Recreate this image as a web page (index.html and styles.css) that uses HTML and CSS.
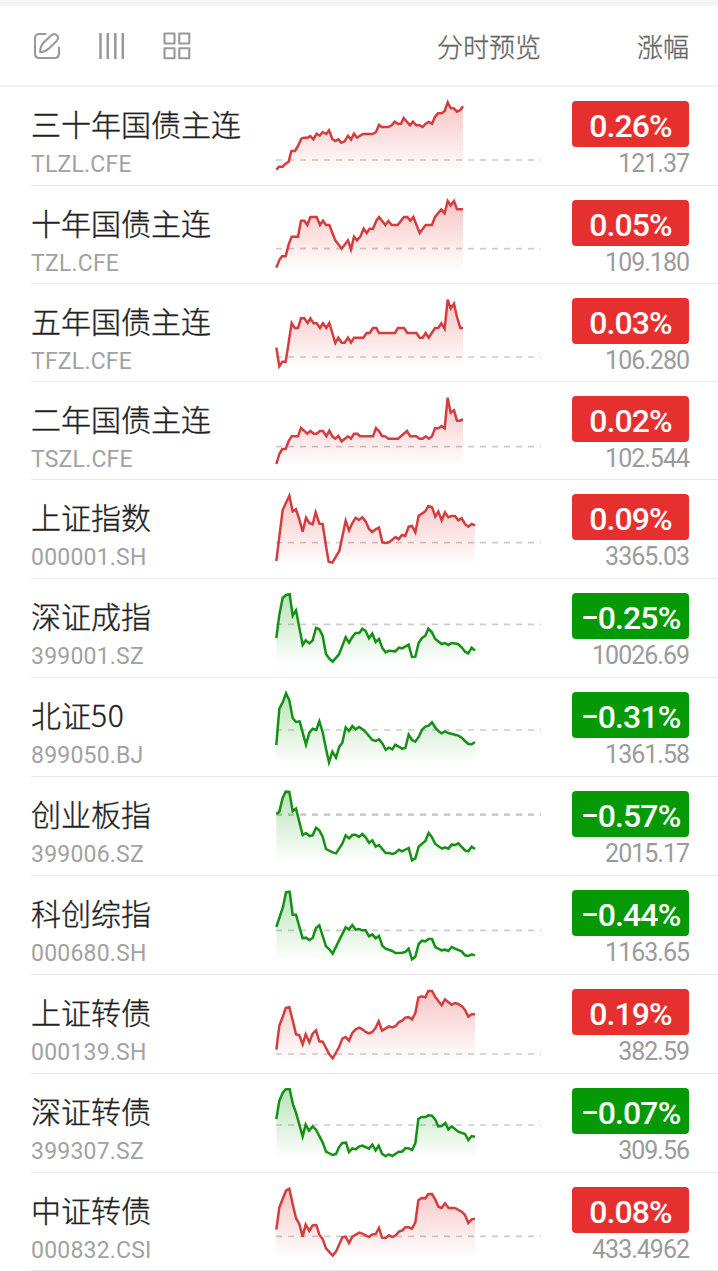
FILE: index.html
```html
<!DOCTYPE html>
<html lang="zh-CN">
<head>
<meta charset="utf-8">
<title>自选行情</title>
<link rel="stylesheet" href="styles.css">
</head>
<body>
<header class="toolbar">
  <div class="tools">
    <svg class="icon" viewBox="0 0 28 28"><path d="M12.500 2H6.500Q2 2 2 6.500V21.500Q2 26 6.500 26H21.500Q26 26 26 21.500V15.500"/><path d="M7.300 20.200C7 16 8.500 12.800 11 10.200L17.800 3.800C20 1.700 22.300 1.800 24 3.500C25.700 5.300 25.200 7.400 23.400 9.200L16.500 16C13.600 18.700 11 19.900 7.300 20.200Z"/></svg>
    <svg class="icon bars" viewBox="0 0 28 28"><path d="M2.500 1V27M9.800 1V27M17.300 1V27M24.800 1V27"/></svg>
    <svg class="icon" viewBox="0 0 28 28"><path d="M1.500 1.500H11.500V11.500H1.500ZM16.300 1.500H26.300V11.500H16.300ZM1.500 16.300H11.500V26.300H1.500ZM16.300 16.300H26.300V26.300H16.300Z"/></svg>
  </div>
  <span class="col-preview">分时预览</span>
  <span class="col-change">涨幅</span>
</header>
<main class="list" id="list"></main>
<svg class="defs" width="0" height="0">
  <defs>
    <linearGradient id="fill-up" x1="0" y1="0" x2="0" y2="1"><stop offset="0" stop-color="#e62e2e" stop-opacity=".28"/><stop offset="1" stop-color="#e62e2e" stop-opacity=".01"/></linearGradient>
    <linearGradient id="fill-down" x1="0" y1="0" x2="0" y2="1"><stop offset="0" stop-color="#0a9a0a" stop-opacity=".28"/><stop offset="1" stop-color="#0a9a0a" stop-opacity=".01"/></linearGradient>
  </defs>
</svg>
<script src="script.js"></script>
</body>
</html>
```
FILE: styles.css
```css
* { box-sizing: border-box; }
body {
  margin: 0;
  background: #fff;
  font-family: Roboto, "Noto Sans CJK SC", sans-serif;
  overflow: hidden;
}
.toolbar {
  height: 87px;
  border-top: 6px solid #f4f4f4;
  border-bottom: 2px solid #f3f3f3;
  display: grid;
  grid-template-columns: 276px 265px 148px;
  align-items: center;
  color: #666;
  font-size: 26px;
  font-weight: 300;
  line-height: 38px;
  -webkit-text-stroke: .35px #666;
}
.tools {
  display: flex;
  gap: 37px;
  padding-left: 33px;
}
.icon {
  width: 28px;
  height: 28px;
  fill: none;
  stroke: #999;
  stroke-width: 2.1;
  stroke-linecap: round;
  stroke-linejoin: round;
}
.bars { stroke-linecap: butt; stroke-width: 2.5; }
.col-preview, .col-change { text-align: right; padding-top: 5px; }
.row {
  margin-left: 31px;
  border-bottom: 1px solid #e8e8e8;
  display: grid;
  grid-template-columns: 245px 265px 148px;
  overflow: hidden;
}
.names { padding-top: 14px; }
.name {
  height: 44px;
  line-height: 44px;
  font-size: 30px;
  font-family: "Noto Sans CJK SC", sans-serif;
  font-weight: 300;
  color: #222;
  white-space: nowrap;
  -webkit-text-stroke: .35px #222;
}
.name .latin { letter-spacing: .8px; }
.code {
  height: 32px;
  margin-top: 4px;
  line-height: 32px;
  font-size: 23px;
  letter-spacing: .2px;
  color: #a2a2a2;
}
.chart { display: block; width: 265px; overflow: visible; }
.chart .base { stroke: #ccc; stroke-width: 5; stroke-dasharray: 18 18; }
.chart .base.thick { stroke-width: 8; }
.chart .line { fill: none; stroke-width: 7.5; stroke-linejoin: miter; }
.up .line { stroke: #d43d3d; }
.down .line { stroke: #159015; }
.up .area { fill: url(#fill-up); }
.down .area { fill: url(#fill-down); }
.values {
  padding-top: 14px;
  display: flex;
  flex-direction: column;
  align-items: flex-end;
}
.badge {
  width: 117px;
  height: 46px;
  border-radius: 4px;
  color: #fff;
  font-size: 32px;
  font-weight: 500;
  line-height: 50px;
  letter-spacing: -.9px;
  text-align: center;
  white-space: nowrap;
}
.up .badge { background: #e63030; }
.down .badge { background: #059a05; }
.price {
  margin-top: 1px;
  height: 32px;
  line-height: 32px;
  font-size: 25px;
  letter-spacing: -1px;
  color: #9b9b9b;
}
```
FILE: script.js
```js
// Each chart is drawn in units of one third of a pixel.
// top: first visible unit of the row; base: previous close; floor: bottom of the shaded area.
const rows = [
  { name: "三十年国债主连", code: "TLZL.CFE", pct: "0.26%", price: "121.37", h: 99, top: -3, base: 216, floor: 250,
    pts: "31,245 39,236 50,236 59,227 68,221 76,189 87,189 96,174 106,152 114,149 125,149 133,144 142,154 152,137 161,143 170,132 181,138 189,127 199,153 208,159 217,154 226,164 236,160 246,143 255,155 264,137 273,149 291,138 320,138 330,132 339,111 347,117 367,117 377,112 386,101 395,107 405,107 413,90 432,112 441,101 451,112 461,112 470,117 479,107 488,102 498,107 507,86 516,76 527,76 536,69 545,43 554,60 564,61 573,71 582,67 591,55" },
  { name: "十年国债主连", code: "TZL.CFE", pct: "0.05%", price: "109.180", h: 98, top: 0, base: 188, floor: 250,
    pts: "31,245 40,222 48,211 59,211 68,175 77,152 96,152 105,104 115,104 124,117 133,93 152,93 162,117 171,104 180,117 190,117 208,163 227,188 246,163 255,190 264,152 273,163 283,152 293,128 302,141 311,128 321,128 331,104 339,93 358,117 367,105 377,117 395,117 414,93 424,93 433,104 442,93 461,141 479,117 498,117 507,93 526,70 536,82 545,45 554,58 564,45 573,70 591,70" },
  { name: "五年国债主连", code: "TFZL.CFE", pct: "0.03%", price: "106.280", h: 98, top: 0, base: 219, floor: 250,
    pts: "31,191 40,247 49,233 59,233 68,175 77,117 86,132 96,132 105,103 115,103 125,117 133,103 143,118 152,118 162,132 171,118 181,132 190,117 208,177 217,161 227,176 236,176 246,161 255,176 264,161 292,161 302,147 311,147 321,132 331,132 339,147 387,147 396,132 414,132 424,147 451,147 461,161 470,161 479,147 488,161 507,132 517,132 526,118 536,134 545,47 554,73 564,59 573,99 583,132 591,132" },
  { name: "二年国债主连", code: "TSZL.CFE", pct: "0.02%", price: "102.544", h: 98, top: 294, base: 488, floor: 544,
    pts: "31,540 40,510 49,495 59,495 68,471 77,457 96,457 105,432 124,449 133,441 143,449 152,449 162,441 171,441 181,457 190,440 199,457 208,464 217,456 227,472 246,457 255,464 264,449 273,449 283,457 321,457 330,432 339,441 348,456 358,457 367,464 396,464 423,441 433,457 451,457 461,464 470,464 479,457 489,464 498,457 507,433 517,433 527,426 536,433 545,341 554,386 564,379 573,410 583,410 591,405" },
  { name: "上证指数", code: "000001.SH", pct: "0.09%", price: "3365.03", h: 99, top: 0, base: 188, floor: 250,
    pts: "31,243 50,90 70,47 80,94 90,88 100,118 110,155 120,113 130,129 140,133 149,97 160,131 170,132 180,198 188,245 199,248 220,213 239,122 249,151 259,129 269,113 279,120 289,112 299,124 309,147 319,156 329,148 339,143 349,187 360,189 370,186 389,171 398,178 408,165 418,168 428,140 438,138 448,157 458,107 478,94 487,78 498,82 508,110 517,95 527,121 537,97 547,112 557,108 567,108 577,121 587,115 597,132 607,140 617,132 627,136" },
  { name: "深证成指", code: "399001.SZ", pct: "-0.25%", price: "10026.69", h: 99, top: 3, base: 139, floor: 252,
    pts: "31,180 40,110 50,60 60,51 71,49 80,113 90,97 110,201 119,187 130,196 140,187 150,150 160,154 170,174 180,228 190,242 200,251 219,229 239,178 249,194 259,177 269,165 280,165 289,152 299,159 309,181 319,167 329,192 339,183 349,210 359,223 369,218 388,220 399,209 408,211 428,200 438,237 448,236 458,194 468,180 478,173 487,152 498,163 507,182 527,198 537,195 547,201 557,195 576,198 587,208 597,221 607,226 617,209 627,218" },
  { name: "北证50", code: "899050.BJ", pct: "-0.31%", price: "1361.58", h: 99, top: 300, base: 456, floor: 549,
    pts: "31,501 40,392 51,371 60,346 70,367 80,420 90,432 101,430 120,500 130,464 140,452 151,456 160,430 170,462 180,512 189,553 199,521 210,539 220,506 229,494 239,448 249,459 259,444 269,454 279,447 289,453 299,462 319,486 329,489 339,484 349,496 359,515 369,509 379,514 388,500 408,512 418,510 428,470 438,486 448,491 459,475 468,455 478,446 488,443 498,433 508,449 518,460 527,466 537,460 547,465 577,473 587,479 597,489 607,498 617,499 627,492" },
  { name: "创业板指", code: "399006.SZ", pct: "-0.57%", price: "2015.17", h: 99, top: 3, base: 116, floor: 252, thick: true,
    pts: "31,114 40,107 50,66 59,47 70,48 80,105 90,98 110,177 120,171 130,180 140,178 150,155 160,163 170,182 180,219 200,229 210,232 229,203 239,178 249,187 259,177 269,176 279,183 289,174 299,184 309,200 319,193 329,212 339,207 359,231 369,231 379,234 388,231 399,221 408,226 428,216 438,253 448,247 458,212 478,195 488,171 498,184 508,204 528,218 537,214 547,218 557,206 567,207 577,202 597,223 607,226 617,212 627,219" },
  { name: "科创综指", code: "000680.SH", pct: "-0.44%", price: "1163.65", h: 99, top: 300, base: 463, floor: 549,
    pts: "31,453 51,393 60,349 71,347 80,416 90,416 110,487 120,485 130,492 140,486 150,456 160,448 180,511 190,520 200,533 219,494 239,454 249,460 259,447 269,461 279,459 289,463 299,463 309,481 319,475 329,487 339,480 349,509 359,518 379,525 388,531 408,530 418,528 428,518 438,550 448,542 458,504 468,494 478,496 488,489 498,489 508,513 527,523 537,521 547,525 557,513 567,518 587,526 597,538 607,540 617,535 627,538" },
  { name: "上证转债", code: "000139.SH", pct: "0.19%", price: "382.59", h: 99, top: 3, base: 240, floor: 254,
    pts: "31,227 40,155 50,129 59,102 70,99 81,143 90,181 100,184 110,211 119,181 130,205 140,179 150,169 160,202 170,203 190,241 200,253 219,220 229,194 239,189 249,200 259,177 269,166 280,161 289,166 299,174 309,178 319,174 329,161 338,142 348,170 369,157 379,160 389,156 399,144 408,140 418,131 428,129 438,136 448,117 457,71 467,67 478,70 487,51 498,51 508,69 527,94 537,76 557,92 567,87 577,90 588,97 597,108 607,128 617,121 627,121" },
  { name: "深证转债", code: "399307.SZ", pct: "-0.07%", price: "309.56", h: 99, top: 0, base: 153, floor: 250,
    pts: "31,135 40,80 50,57 59,46 71,46 81,91 90,116 110,187 119,152 129,170 140,157 150,167 170,205 180,233 200,243 210,240 219,220 229,207 240,206 249,234 259,223 269,226 279,218 289,215 309,224 319,212 329,229 338,215 348,239 359,247 368,241 379,246 398,233 408,233 418,223 428,223 438,228 448,208 457,135 466,129 479,129 487,124 498,125 508,137 517,157 527,156 538,147 547,166 557,157 577,173 597,180 607,198 617,186 627,188" },
  { name: "中证转债", code: "000832.CSI", pct: "0.08%", price: "433.4962", h: 98, top: 297, base: 487, floor: 546,
    pts: "31,467 40,400 60,350 70,344 80,390 90,432 100,450 110,488 119,452 130,471 140,454 151,453 160,482 170,495 180,523 200,545 210,533 229,490 239,488 249,507 259,488 280,476 289,479 309,489 319,481 329,480 339,462 348,491 359,492 369,484 379,489 389,484 399,473 409,469 418,460 428,460 438,464 448,445 457,379 467,372 478,373 487,360 498,360 508,377 517,398 527,402 537,388 548,402 567,402 587,413 597,423 607,447 617,436 627,434" }
];

document.getElementById("list").innerHTML = rows.map(r => {
  const p = r.pts.split(" ");
  const endX = p[p.length - 1].split(",")[0];
  const chartHeight = r.h - 1;
  const name = r.name.replace(/\d+/, '<span class="latin">$&</span>');
  return `<section class="row ${r.pct[0] === "-" ? "down" : "up"}" style="height:${r.h}px">
    <div class="names"><div class="name">${name}</div><div class="code">${r.code}</div></div>
    <svg class="chart" height="${chartHeight}" viewBox="30 ${r.top} 795 ${chartHeight * 3}">
      <line class="base${r.thick ? " thick" : ""}" x1="30" x2="825" y1="${r.base}" y2="${r.base}"/>
      <polygon class="area" points="31,${r.floor} ${r.pts} ${endX},${r.floor}"/>
      <polyline class="line" points="${r.pts}"/>
    </svg>
    <div class="values"><div class="badge">${r.pct.replace("-", "−")}</div><div class="price">${r.price}</div></div>
  </section>`;
}).join("");
```
